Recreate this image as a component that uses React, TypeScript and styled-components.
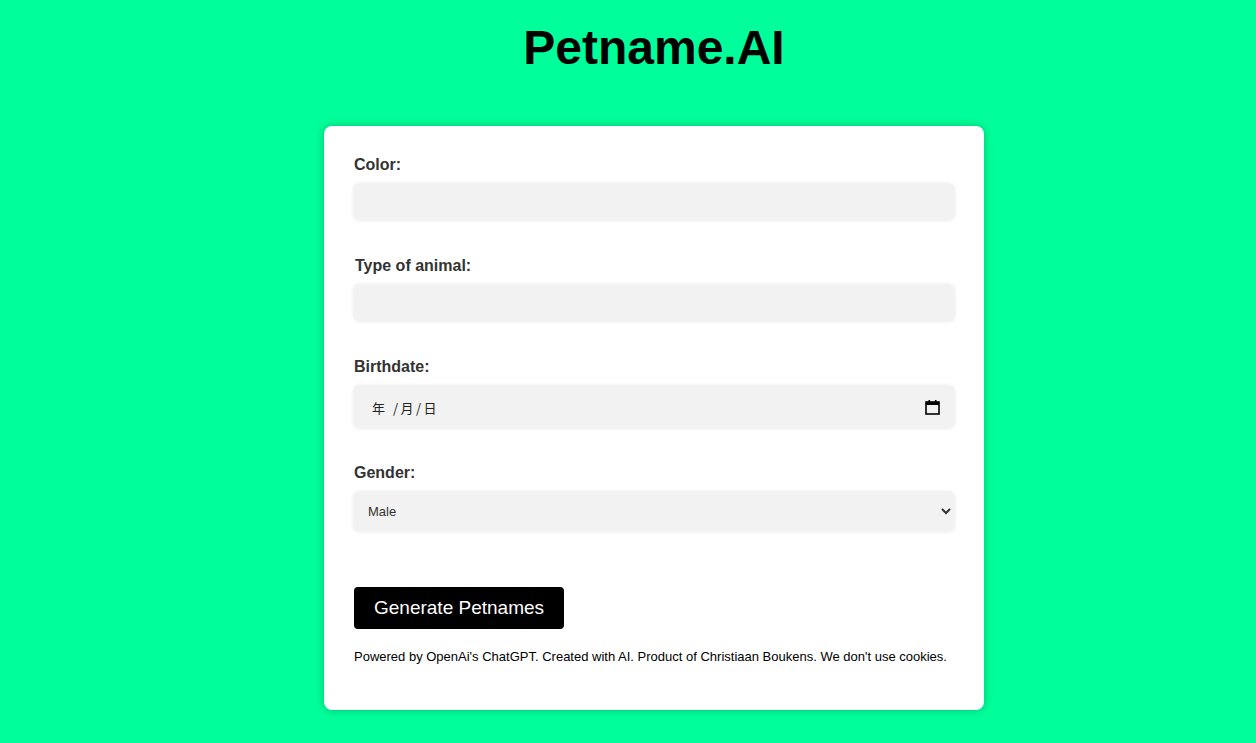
import styled, { createGlobalStyle } from 'styled-components'

const GlobalStyle = createGlobalStyle`
  html, body {
    margin: 0;
    padding: 0;
    background: #00ff9a;
    font-family: 'Liberation Sans', Arial, sans-serif;
  }
`

const fields = [
  { id: 'color', label: 'Color:' },
  { id: 'animal', label: 'Type of animal:', nudge: true }
]

export default function App() {
  return (
    <>
      <GlobalStyle />
      <S.Page>
        <S.Title>Petname.AI</S.Title>
        <S.Card>
          {fields.map((f) => (
            <S.Field key={f.id}>
              <S.Label htmlFor={f.id} nudge={f.nudge}>
                {f.label}
              </S.Label>
              <S.Input id={f.id} type="text" />
            </S.Field>
          ))}
          <S.Field gap={36}>
            <S.Label>Birthdate:</S.Label>
            <S.DateBox>
              <S.DateText>年 /月/日</S.DateText>
              <svg width="15" height="16" viewBox="0 0 15 16">
                <rect x="1" y="3" width="13" height="12" fill="none" stroke="#000" strokeWidth="1.6" />
                <rect x="1" y="3" width="13" height="3" fill="#000" />
                <rect x="3.5" y="1" width="1.6" height="3" fill="#000" />
                <rect x="9.9" y="1" width="1.6" height="3" fill="#000" />
              </svg>
            </S.DateBox>
          </S.Field>
          <S.Field gap={56}>
            <S.Label htmlFor="gender">Gender:</S.Label>
            <S.Select id="gender" defaultValue="male">
              <option value="male">Male</option>
              <option value="female">Female</option>
            </S.Select>
          </S.Field>
          <S.Button>Generate Petnames</S.Button>
          <S.Footer>
            Powered by OpenAi's ChatGPT. Created with AI. Product of Christiaan Boukens. We don't use cookies.
          </S.Footer>
        </S.Card>
      </S.Page>
    </>
  )
}

const S = {
  Page: styled.div`
    display: flex;
    flex-direction: column;
    align-items: center;
    padding: 20px 0 33px 52px;
    min-height: 100vh;
    box-sizing: border-box;
  `,
  Title: styled.h1`
    margin: 0 0 51px;
    font-size: 48px;
    font-weight: bold;
    color: #000;
    line-height: normal;
  `,
  Card: styled.div`
    width: 660px;
    box-sizing: border-box;
    padding: 30px 30px 30px;
    background: #fff;
    border-radius: 8px;
    box-shadow: 0 0 10px rgba(0, 0, 0, 0.25);
  `,
  Field: styled.div<{ gap?: number }>`
    display: flex;
    flex-direction: column;
    margin-bottom: ${(p) => p.gap ?? 37}px;
  `,
  Label: styled.label<{ nudge?: boolean }>`
    font-size: 16px;
    font-weight: bold;
    color: #333;
    margin: 0 0 10px ${(p) => (p.nudge ? '1px' : '0')};
  `,
  Input: styled.input`
    height: 36px;
    box-sizing: border-box;
    padding: 10px;
    border: none;
    border-radius: 5px;
    background: #f2f2f2;
    box-shadow: 0 0 4px rgba(0, 0, 0, 0.12);
    font-size: 14px;
    font-family: inherit;
    outline: none;
  `,
  DateBox: styled.div`
    height: 42px;
    box-sizing: border-box;
    padding: 0 14px 0 18px;
    display: flex;
    align-items: center;
    justify-content: space-between;
    border-radius: 5px;
    background: #f2f2f2;
    box-shadow: 0 0 4px rgba(0, 0, 0, 0.12);
  `,
  DateText: styled.span`
    font-family: 'Noto Sans CJK SC', 'Liberation Sans', sans-serif;
    font-size: 13px;
    color: #222;
    letter-spacing: 2.5px;
  `,
  Select: styled.select`
    height: 39px;
    box-sizing: border-box;
    padding: 0 6px 0 10px;
    border: none;
    border-radius: 5px;
    background: #f2f2f2;
    box-shadow: 0 0 4px rgba(0, 0, 0, 0.12);
    font-family: 'Liberation Sans', Arial, sans-serif;
    font-size: 13px;
    color: #333;
    outline: none;
  `,
  Button: styled.button`
    height: 42px;
    padding: 0 20px;
    border: none;
    border-radius: 4px;
    background: #000;
    color: #fff;
    font-family: inherit;
    font-size: 19px;
    cursor: pointer;
  `,
  Footer: styled.p`
    margin: 20px 0 16px;
    font-size: 13px;
    color: #000;
  `
}
